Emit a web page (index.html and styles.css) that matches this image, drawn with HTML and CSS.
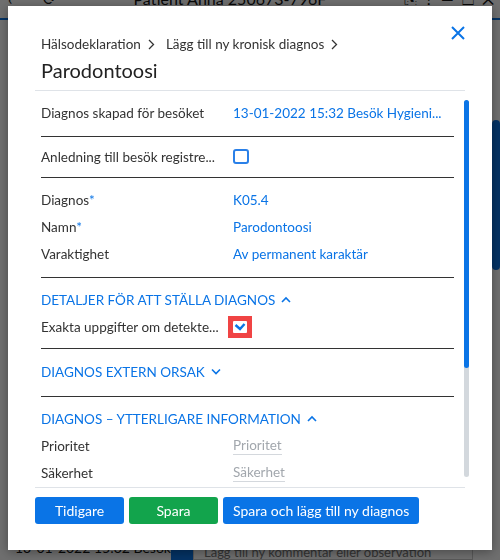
FILE: index.html
```html
<!DOCTYPE html>
<html lang="sv">
<head>
    <meta charset="UTF-8">
    <title>Parodontoosi</title>
    <link rel="stylesheet" href="styles.css">
</head>
<body>
    <!-- underlying patient window -->
    <div class="app">
        <div class="titlebar">
            <span class="tb-nav">‹</span>
            <span class="tb-nav tb-refresh">⟳</span>
            <span class="tb-title">Patient Anna 250673-796F</span>
            <span class="tb-icons">⎘ &nbsp;?&nbsp; — &nbsp;☐&nbsp; ✕</span>
        </div>
        <div class="app-main">
            <div class="app-content"></div>
            <div class="app-scroll"><div class="app-thumb"></div></div>
        </div>
        <div class="app-footer">
            <span class="app-visit">13-01-2022 15:32 Besök</span>
            <span class="app-btn"></span>
            <span class="app-input">Lägg till ny kommentar eller observation</span>
        </div>
    </div>
    <div class="overlay"></div>

    <div class="modal">
        <div class="modal-head">
            <div class="head-text">
                <div class="crumbs">
                    Hälsodeklaration
                    <svg class="crumb-chev" width="7" height="11" viewBox="0 0 7 11"><polyline points="1,1 5.5,5.5 1,10" /></svg>
                    Lägg till ny kronisk diagnos
                    <svg class="crumb-chev" width="7" height="11" viewBox="0 0 7 11"><polyline points="1,1 5.5,5.5 1,10" /></svg>
                </div>
                <h1 class="title">Parodontoosi</h1>
            </div>
            <button class="close" aria-label="Stäng">
                <svg width="14" height="14" viewBox="0 0 14 14"><path d="M1 1 L13 13 M13 1 L1 13" /></svg>
            </button>
        </div>

        <div class="modal-body">
            <div class="form">
                <div class="group">
                    <div class="row">
                        <span class="label">Diagnos skapad för besöket</span>
                        <span class="value link">13-01-2022 15:32 Besök Hygieni...</span>
                    </div>
                </div>
                <div class="group group-check">
                    <div class="row">
                        <span class="label">Anledning till besök registre...</span>
                        <span class="value"><span class="checkbox"></span></span>
                    </div>
                </div>
                <div class="group">
                    <div class="row">
                        <span class="label">Diagnos<span class="req">*</span></span>
                        <span class="value link">K05.4</span>
                    </div>
                    <div class="row">
                        <span class="label">Namn<span class="req">*</span></span>
                        <span class="value link">Parodontoosi</span>
                    </div>
                    <div class="row">
                        <span class="label">Varaktighet</span>
                        <span class="value link">Av permanent karaktär</span>
                    </div>
                </div>
                <div class="group group-tight">
                    <div class="section-title">
                        Detaljer för att ställa diagnos
                        <svg class="sec-chev" width="10" height="7" viewBox="0 0 10 7"><polyline points="1,6 5,2 9,6" /></svg>
                    </div>
                    <div class="row">
                        <span class="label">Exakta uppgifter om detekte...</span>
                        <span class="value">
                            <span class="highlight">
                                <span class="checkbox checked">
                                    <svg width="12" height="9" viewBox="0 0 12 9"><polyline points="1.5,3 6,7 10.5,2" /></svg>
                                </span>
                            </span>
                        </span>
                    </div>
                </div>
                <div class="group group-single">
                    <div class="section-title">
                        Diagnos extern orsak
                        <svg class="sec-chev" width="10" height="7" viewBox="0 0 10 7"><polyline points="1,1.5 5,5.5 9,1.5" /></svg>
                    </div>
                </div>
                <div class="group group-open">
                    <div class="section-title">
                        Diagnos – ytterligare information
                        <svg class="sec-chev" width="10" height="7" viewBox="0 0 10 7"><polyline points="1,6 5,2 9,6" /></svg>
                    </div>
                    <div class="row">
                        <span class="label">Prioritet</span>
                        <span class="value"><span class="placeholder">Prioritet</span></span>
                    </div>
                    <div class="row">
                        <span class="label">Säkerhet</span>
                        <span class="value"><span class="placeholder">Säkerhet</span></span>
                    </div>
                </div>
            </div>
            <div class="scrollbar"><div class="thumb"></div></div>
        </div>

        <div class="modal-foot">
            <button class="btn btn-primary">Tidigare</button>
            <button class="btn btn-success">Spara</button>
            <button class="btn btn-primary">Spara och lägg till ny diagnos</button>
        </div>
    </div>
</body>
</html>
```

FILE: styles.css
```css
body {
    margin: 0;
    width: 500px;
    height: 560px;
    overflow: hidden;
    font-family: Lato, "Liberation Sans", sans-serif;
    color: #333;
}

/* Background window (dimmed by the overlay) */
.app {
    height: 560px;
    display: flex;
    flex-direction: column;
    background: #fff;
}

.titlebar {
    height: 18px;
    flex: none;
    display: flex;
    align-items: flex-end;
    padding: 0 6px 0 8px;
    border-bottom: 2px solid #0a74e6;
    font-size: 16px;
    line-height: 18px;
    color: #111;
}

.titlebar > span {
    padding-bottom: 10px;
}

.tb-refresh {
    margin-left: 30px;
}

.tb-title {
    margin-left: 78px;
}

.tb-icons {
    margin-left: auto;
}

.app-main {
    flex: 1;
    display: flex;
}

.app-content {
    flex: 1;
}

.app-scroll {
    width: 8px;
    padding-top: 100px;
}

.app-thumb {
    height: 150px;
    background: #0a74e6;
    border-radius: 4px;
}

.app-footer {
    height: 16px;
    flex: none;
    display: flex;
    align-items: flex-start;
    padding-left: 15px;
    font-size: 14px;
    line-height: 14px;
    color: #111;
}

.app-visit {
    width: 156px;
    margin-top: -3px;
}

.app-btn {
    width: 22px;
    height: 16px;
    background: #0a74e6;
}

.app-input {
    width: 268px;
    height: 14px;
    border: 1px solid #ccc;
    padding-left: 10px;
    font-size: 13px;
    color: #777;
}

.overlay {
    position: fixed;
    inset: 0;
    background: rgba(0, 0, 0, 0.57);
}

/* Dialog */
.modal {
    position: fixed;
    top: 6px;
    left: 8px;
    width: 484px;
    height: 544px;
    box-sizing: border-box;
    padding: 0 22px 0 27px;
    background: #fff;
    box-shadow: 0 2px 10px rgba(0, 0, 0, 0.35);
    display: flex;
    flex-direction: column;
}

.modal-head {
    flex: none;
    display: flex;
    justify-content: space-between;
    align-items: flex-start;
    margin-right: 5px;
    padding: 20px 0 7px 6px;
    border-bottom: 1px solid #dfe3e8;
}

.crumbs {
    margin-top: 9px;
    font-size: 13.5px;
    line-height: 18px;
    color: #333;
    display: flex;
    align-items: center;
    gap: 7px;
}

.crumb-chev {
    margin-right: 4px;
}

.crumb-chev polyline {
    fill: none;
    stroke: #333;
    stroke-width: 1.3;
}

.title {
    margin: 4px 0 0;
    font-size: 20px;
    font-weight: normal;
    line-height: 26px;
    color: #222;
}

.close {
    border: none;
    background: none;
    padding: 0;
    width: 14px;
    height: 14px;
    cursor: pointer;
}

.close path {
    stroke: #0a74e6;
    stroke-width: 2;
    fill: none;
}

.modal-body {
    flex: 1;
    min-height: 0;
    display: flex;
}

.form {
    flex: 1;
    overflow: hidden;
    padding: 0 6px;
}

.group {
    padding: 8px 0 10px;
    border-bottom: 1px solid #333;
}

.group-check {
    padding: 6px 0 7px;
}

.group-tight {
    padding: 8px 0 8px;
}

.group-single {
    padding: 9px 0 11px;
}

.group-open {
    border-bottom: none;
}

.row {
    display: grid;
    grid-template-columns: 192px 1fr;
    height: 27px;
    align-items: center;
    font-size: 13.5px;
}

.label {
    white-space: nowrap;
    overflow: hidden;
    color: #333;
}

.value {
    display: flex;
    align-items: center;
    white-space: nowrap;
}

.link {
    color: #0a74e6;
}

.req {
    color: #0a74e6;
}

.section-title {
    height: 27px;
    display: flex;
    align-items: center;
    gap: 6px;
    font-size: 13.5px;
    text-transform: uppercase;
    color: #0a74e6;
}

.sec-chev polyline {
    fill: none;
    stroke: #0a74e6;
    stroke-width: 1.6;
}

.checkbox {
    width: 12px;
    height: 11px;
    border: 2px solid #2a80e8;
    border-radius: 3px;
    background: #fff;
    display: flex;
    align-items: center;
    justify-content: center;
}

.checkbox.checked {
    width: 14px;
    height: 12px;
    border: none;
    border-radius: 1px;
}

.checkbox svg polyline {
    fill: none;
    stroke: #0a74e6;
    stroke-width: 2.4;
}

.highlight {
    margin-left: -5px;
    padding: 5px;
    background: #f04444;
    display: flex;
}

.placeholder {
    color: #a2a7ad;
    border-bottom: 1px solid #d4d8dd;
    line-height: 17px;
}

.scrollbar {
    width: 5px;
    margin: 9px 1px 10px 4px;
    border-radius: 3px;
    background: #d3d8dd;
}

.thumb {
    height: 268px;
    border-radius: 3px;
    background: #0a74e6;
}

.modal-foot {
    flex: none;
    display: flex;
    gap: 5px;
    margin-right: 5px;
    padding: 9px 0 26px;
    border-top: 1px solid #dfe3e8;
}

.btn {
    height: 27px;
    min-width: 89px;
    padding: 0 10px;
    border: none;
    border-radius: 3px;
    color: #fff;
    font-family: Lato, "Liberation Sans", sans-serif;
    font-size: 14px;
    cursor: pointer;
}

.btn-primary {
    background: #0a74e6;
}

.btn-success {
    background: #12a44c;
}
```
